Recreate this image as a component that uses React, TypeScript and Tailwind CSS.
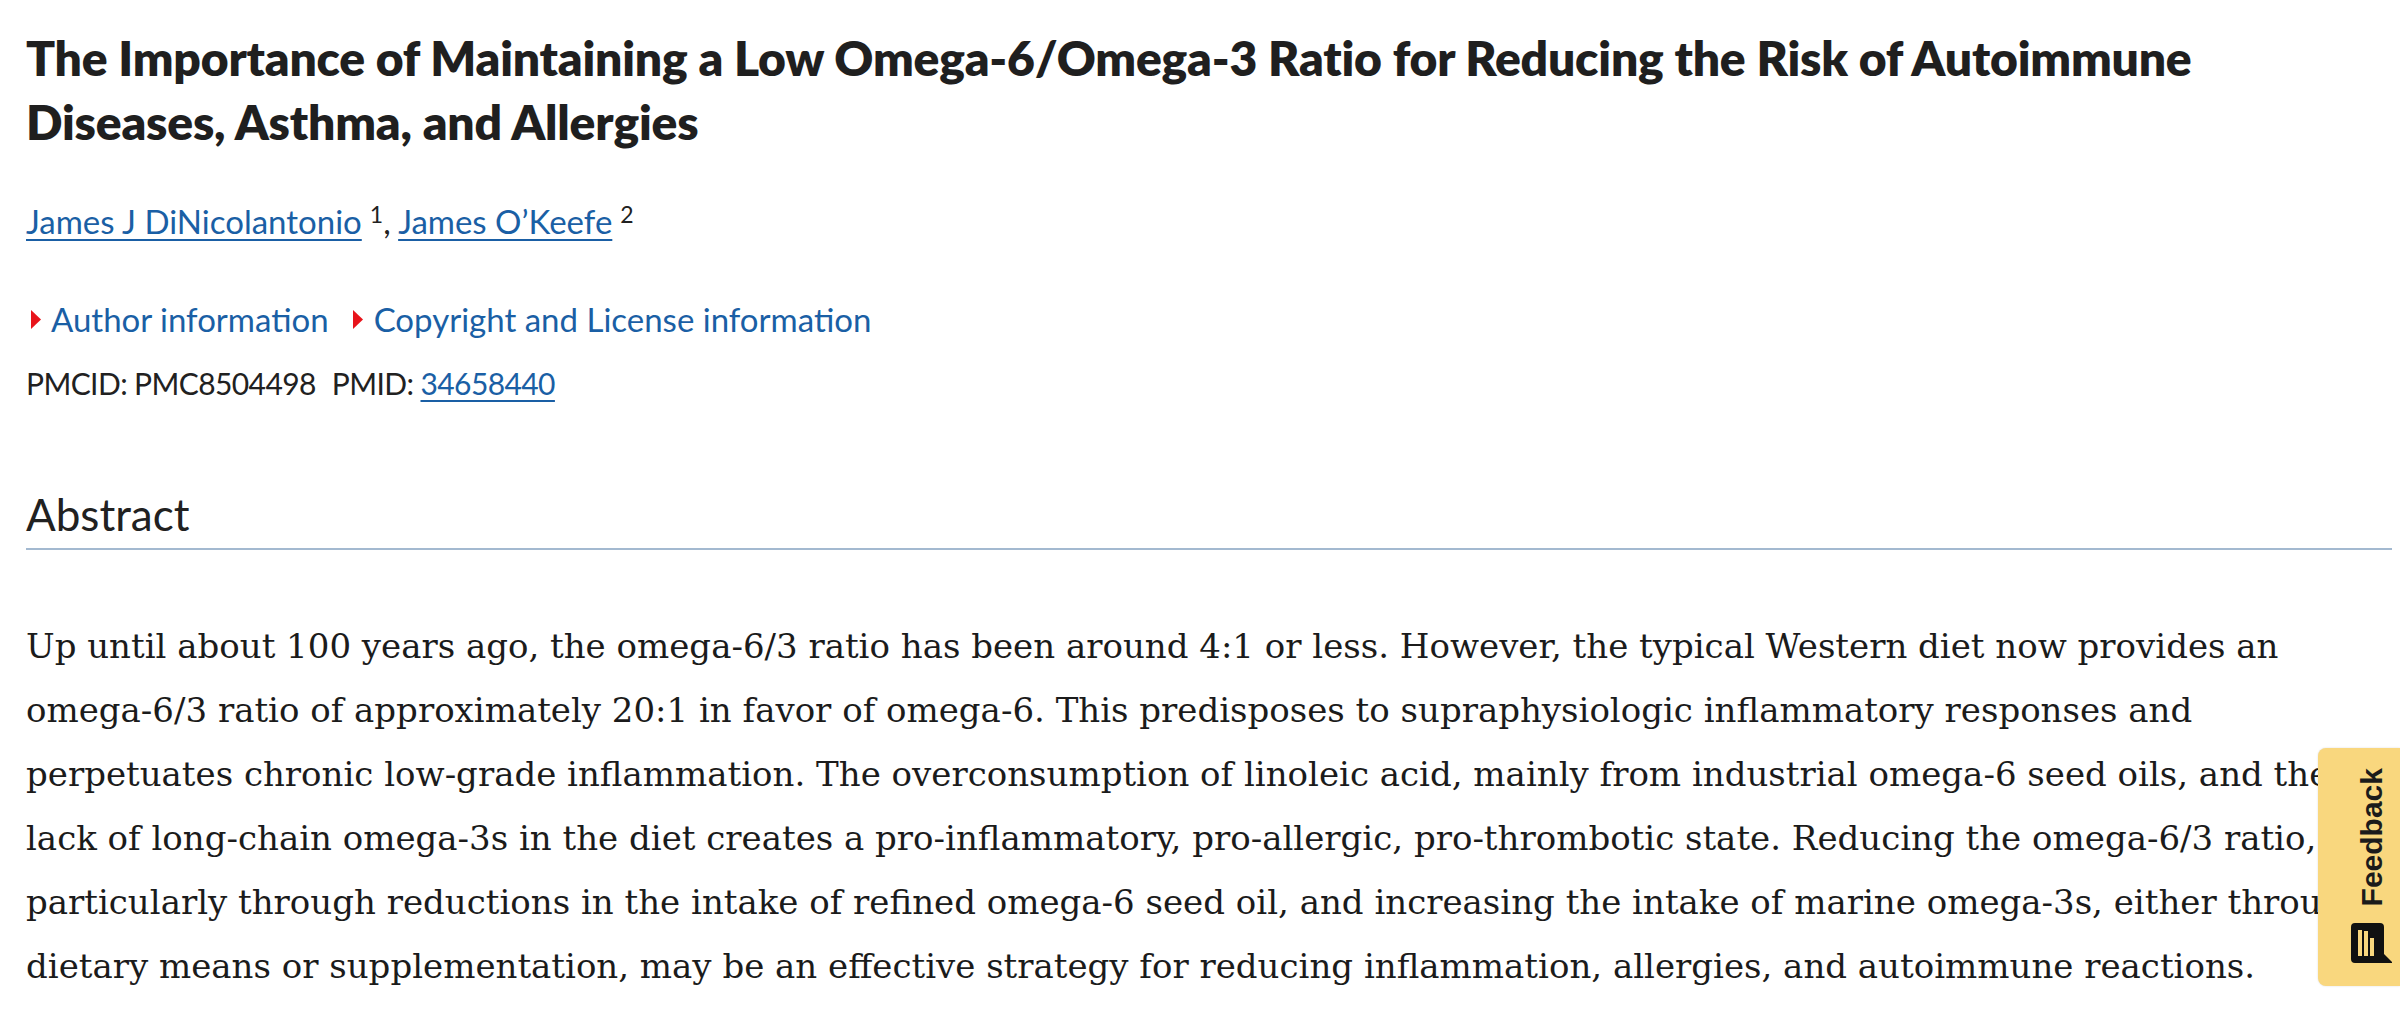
import React from 'react';

function Caret() {
  return (
    <svg width="10" height="19" viewBox="0 0 10 19" className="shrink-0">
      <path d="M0 0 L10 9.5 L0 19 Z" fill="#e8141b" />
    </svg>
  );
}

function FeedbackIcon() {
  return (
    <svg width="42" height="41" viewBox="0 0 42 41">
      <path
        d="M4 0 H29 A4 4 0 0 1 33 4 V31 L41 39 V40 H4 A4 4 0 0 1 0 36 V4 A4 4 0 0 1 4 0 Z"
        fill="#111"
      />
      <rect x="7" y="7" width="4" height="26" fill="#f9d77e" />
      <rect x="13" y="8" width="4" height="25" fill="#f9d77e" />
      <rect x="19" y="15" width="4" height="18" fill="#f9d77e" />
    </svg>
  );
}

export default function App() {
  return (
    <div className="relative min-h-[1031px] bg-white overflow-hidden">
      <div className="pl-[26px] pr-[8px] pt-[26px]">
        {/* Title */}
        <h1 className="max-w-[2260px] font-['Lato',sans-serif] font-extrabold text-[48px] leading-[64px] tracking-[-0.2px] text-[#1f1f1f]">
          The Importance of Maintaining a Low Omega-6/Omega-3 Ratio for Reducing the Risk of Autoimmune Diseases, Asthma, and Allergies
        </h1>

        {/* Authors */}
        <div className="mt-[47px] font-['Lato',sans-serif] text-[33px] leading-[40px] text-[#212121]">
          <a href="#" className="text-[#1a5fa5] underline decoration-2 underline-offset-[5px]">
            James J DiNicolantonio
          </a>
          <sup className="text-[23px] ml-[8px]">1</sup>,{' '}
          <a href="#" className="text-[#1a5fa5] underline decoration-2 underline-offset-[5px]">
            James O’Keefe
          </a>
          <sup className="text-[23px] ml-[8px]">2</sup>
        </div>

        {/* Expanders */}
        <div className="mt-[58px] flex items-center font-['Lato',sans-serif] text-[33px] leading-[40px] text-[#1a5fa5]">
          <span className="flex items-center gap-[10px] pl-[5px]">
            <Caret />
            <span>Author information</span>
          </span>
          <span className="flex items-center gap-[11px] ml-[24px]">
            <Caret />
            <span>Copyright and License information</span>
          </span>
        </div>

        {/* IDs */}
        <div className="mt-[24px] font-['Lato',sans-serif] text-[30px] leading-[40px] tracking-[-0.6px] text-[#212121]">
          <span>PMCID: PMC8504498</span>
          <span className="ml-[16px]">PMID: </span>
          <a href="#" className="text-[#1a5fa5] underline decoration-2 underline-offset-[5px]">
            34658440
          </a>
        </div>

        {/* Abstract */}
        <h2 className="mt-[83px] pb-[6px] border-b-2 border-[#a3b9d0] font-['Lato',sans-serif] font-normal text-[44px] leading-[56px] text-[#212121]">
          Abstract
        </h2>

        <p className="mt-[64px] font-['DejaVu_Serif',serif] text-[34px] leading-[64px] text-[#1b1b1b] pr-[20px]">
          Up until about 100 years ago, the omega-6/3 ratio has been around 4:1 or less. However, the typical Western diet now provides an omega-6/3 ratio of approximately 20:1 in favor of omega-6. This predisposes to supraphysiologic inflammatory responses and perpetuates chronic low-grade inflammation. The overconsumption of linoleic acid, mainly from industrial omega-6 seed oils, and the lack of long-chain omega-3s in the diet creates a pro-inflammatory, pro-allergic, pro-thrombotic state. Reducing the omega-6/3 ratio, particularly through reductions in the intake of refined omega-6 seed oil, and increasing the intake of marine omega-3s, either through dietary means or supplementation, may be an effective strategy for reducing inflammation, allergies, and autoimmune reactions.
        </p>
      </div>

      {/* Feedback tab */}
      <button className="absolute right-0 top-[748px] w-[82px] h-[238px] rounded-l-[8px] bg-[#f9d77e] shadow-[0_0_2px_rgba(0,0,0,0.15)] flex flex-col items-center pl-[26px] pt-[20px]">
        <span className="[writing-mode:vertical-rl] rotate-180 font-['Liberation_Sans',sans-serif] font-bold text-[30px] leading-[30px] text-[#1b1b1b]">
          Feedback
        </span>
        <span className="mt-[17px]">
          <FeedbackIcon />
        </span>
      </button>
    </div>
  );
}
